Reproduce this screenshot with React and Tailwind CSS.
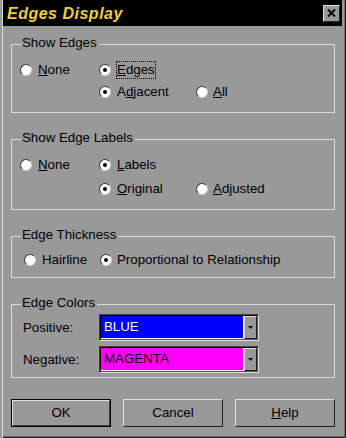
import React from "react";

function Radio({ checked, focus, children, gap = "gap-[6px]" }) {
  return (
    <div className={"flex items-center h-[18px] " + gap}>
      <span className="w-[12px] h-[12px] shrink-0 rounded-full bg-white border border-t-[#3a3a3a] border-l-[#3a3a3a] border-r-[#d0d0d0] border-b-[#d0d0d0] flex items-center justify-center">
        {checked && <span className="w-[4px] h-[4px] rounded-full bg-black" />}
      </span>
      {focus ? (
        <span className="-ml-[1px] border border-dotted border-black leading-[16px]">{children}</span>
      ) : (
        <span className="leading-[16px]">{children}</span>
      )}
    </div>
  );
}

function Group({ label, className, children }) {
  return (
    <div className={"relative border border-[#dcdcdc] " + className}>
      <span className="absolute left-[9px] top-[-10px] bg-[#999999] pl-[1px] pr-[2px] leading-[16px]">
        {label}
      </span>
      {children}
    </div>
  );
}

function Combo({ color, textColor, text }) {
  return (
    <div className="w-[160px] h-[27px] flex border border-t-[#404040] border-l-[#404040] border-b-[#dedede] border-r-[#dedede]">
      <div className="flex-1 flex border border-t-black border-l-black border-b-[#555] border-r-[#555]">
        <div
          className={
            "flex-1 flex items-center pl-[3px] border-b border-r border-white " + color + " " + textColor
          }
        >
          {text}
        </div>
        <div className="w-[13px] bg-[#999999] border border-t-[#dedede] border-l-[#dedede] border-b-[#222] border-r-[#222] flex items-center justify-center">
          <svg width="5" height="3" viewBox="0 0 5 3">
            <path d="M0 0H5L2.5 3Z" fill="black" />
          </svg>
        </div>
      </div>
    </div>
  );
}

function Btn({ children, def }) {
  if (def) {
    return (
      <div className="w-[100px] h-[28px] border border-black">
        <div className="w-full h-full border border-t-[#e0e0e0] border-l-[#e0e0e0] border-b-[#404040] border-r-[#404040] flex items-center justify-center">
          {children}
        </div>
      </div>
    );
  }
  return (
    <div className="w-[100px] h-[28px] border border-t-[#e0e0e0] border-l-[#e0e0e0] border-b-[#202020] border-r-[#202020] flex items-center justify-center">
      {children}
    </div>
  );
}

export default function App() {
  return (
    <div className="w-[346px] h-[438px] bg-[#999999] text-black text-[13.3px] font-['Liberation_Sans',Arial,sans-serif] flex flex-col shadow-[inset_2px_0_0_#999999,inset_3px_0_0_#d8d8d8,inset_-1px_-1px_0_#202020,inset_-2px_-2px_0_#6a6a6a] overflow-hidden">
      {/* Title bar */}
      <div className="ml-[3px] mr-[4px] h-[26px] shrink-0 bg-black flex items-center justify-between pl-[4px] pr-[2px]">
        <span className="text-[16px] font-bold italic tracking-[0.5px] text-[#f0d038] leading-[20px] pt-[1px]">
          Edges Display
        </span>
        <div className="w-[17px] h-[17px] bg-[#999999] border border-t-[#e0e0e0] border-l-[#e0e0e0] border-b-[#202020] border-r-[#202020] flex items-center justify-center">
          <svg width="9" height="8" viewBox="0 0 9 8">
            <path d="M1 0.5L8 7.5M8 0.5L1 7.5" stroke="black" strokeWidth="2" />
          </svg>
        </div>
      </div>

      <div className="px-[11px] flex flex-col">
        {/* Show Edges */}
        <Group label="Show Edges" className="mt-[18px] h-[69px] pt-[16px]">
          <div className="flex pl-[8px]">
            <div className="w-[79px]">
              <Radio>
                <u>N</u>one
              </Radio>
            </div>
            <div className="w-[97px]">
              <Radio checked focus>
                <u>E</u>dges
              </Radio>
            </div>
          </div>
          <div className="flex pl-[87px] mt-[4px]">
            <div className="w-[97px]">
              <Radio checked>
                A<u>d</u>jacent
              </Radio>
            </div>
            <div>
              <Radio gap="gap-[5px]">
                <u>A</u>ll
              </Radio>
            </div>
          </div>
        </Group>

        {/* Show Edge Labels */}
        <Group label="Show Edge Labels" className="mt-[26px] h-[71px] pt-[16px]">
          <div className="flex pl-[8px]">
            <div className="w-[79px]">
              <Radio>
                <u>N</u>one
              </Radio>
            </div>
            <div className="w-[97px]">
              <Radio checked>
                <u>L</u>abels
              </Radio>
            </div>
          </div>
          <div className="flex pl-[87px] mt-[6px]">
            <div className="w-[97px]">
              <Radio checked>
                <u>O</u>riginal
              </Radio>
            </div>
            <div>
              <Radio gap="gap-[5px]">
                <u>A</u>djusted
              </Radio>
            </div>
          </div>
        </Group>

        {/* Edge Thickness */}
        <Group label="Edge Thickness" className="mt-[26px] h-[42px] pt-[14px]">
          <div className="flex pl-[12px]">
            <div className="w-[76px]">
              <Radio>Hairline</Radio>
            </div>
            <div>
              <Radio checked gap="gap-[5px]">
                Proportional to Relationship
              </Radio>
            </div>
          </div>
        </Group>

        {/* Edge Colors */}
        <Group label="Edge Colors" className="mt-[26px] h-[74px] pt-[9px]">
          <div className="flex items-center pl-[11px]">
            <span className="w-[76px] leading-[16px]">Positive:</span>
            <Combo color="bg-[#0000ff]" textColor="text-white" text="BLUE" />
          </div>
          <div className="flex items-center pl-[11px] mt-[5px]">
            <span className="w-[76px] leading-[16px]">Negative:</span>
            <Combo color="bg-[#ff00ff]" textColor="text-black" text="MAGENTA" />
          </div>
        </Group>

        {/* Buttons */}
        <div className="mt-[21px] flex gap-[12px]">
          <Btn def>OK</Btn>
          <Btn>Cancel</Btn>
          <Btn>
            <u>H</u>elp
          </Btn>
        </div>
      </div>
    </div>
  );
}
